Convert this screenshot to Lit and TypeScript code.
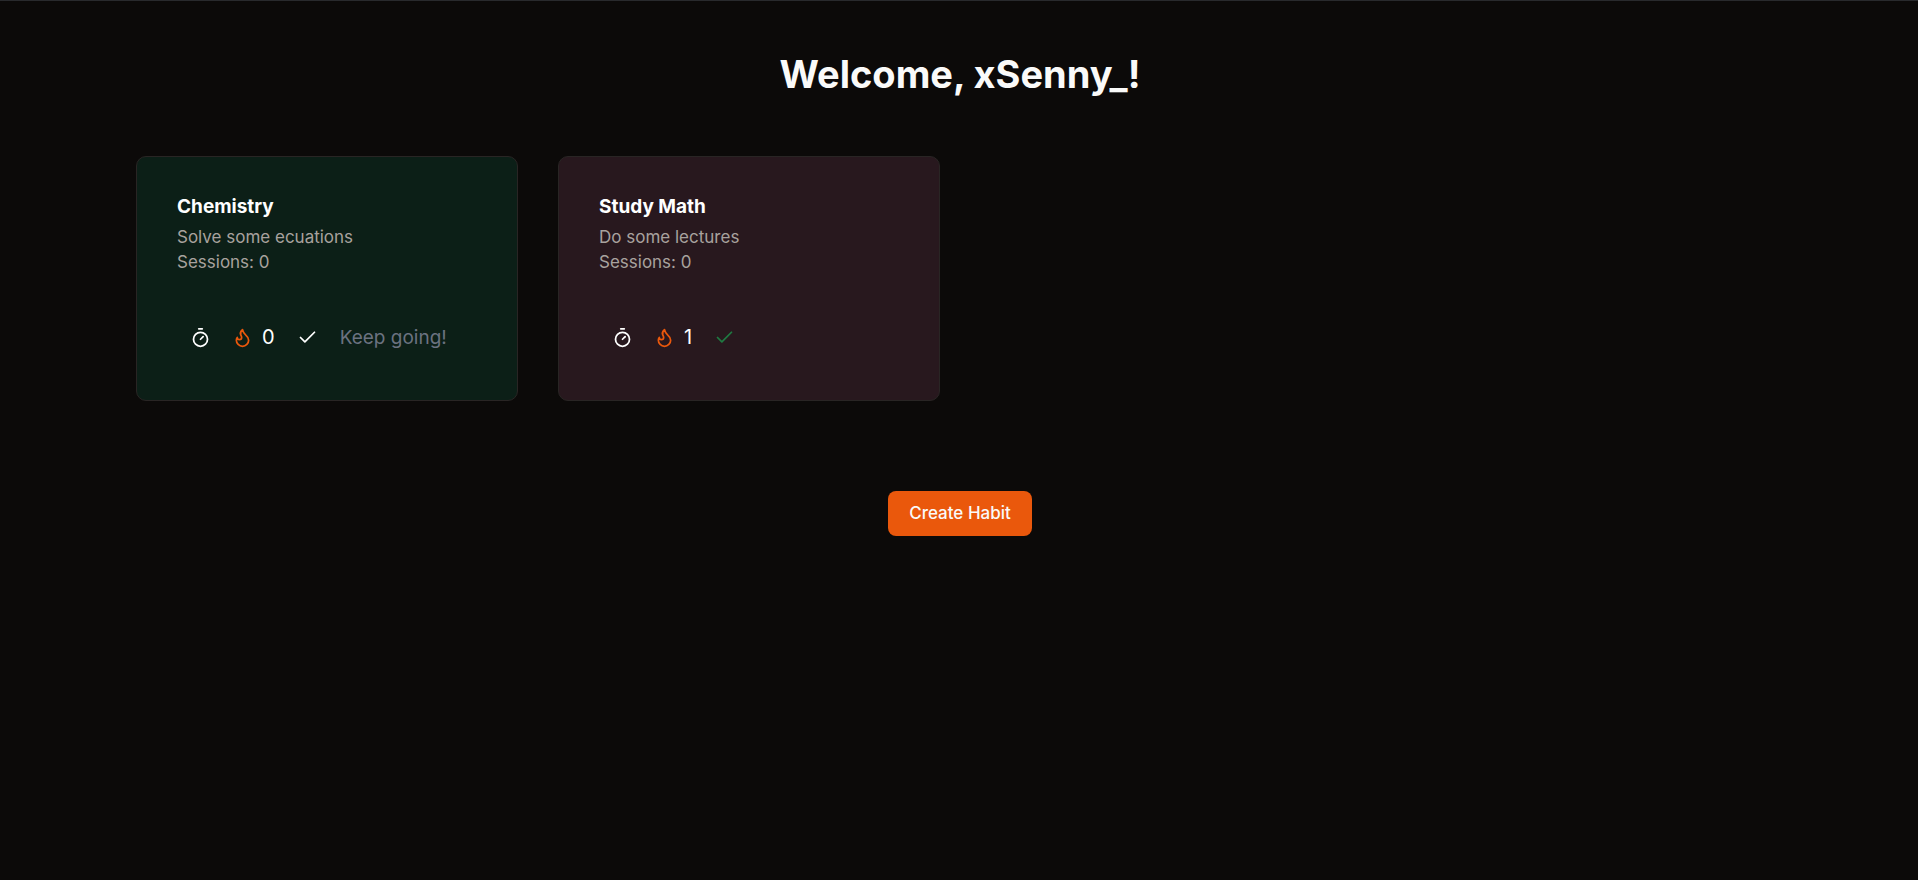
import { LitElement, html, svg, css, nothing } from "lit";
import { customElement, property, state } from "lit/decorators.js";
import { classMap } from "lit/directives/class-map.js";

interface Habit {
  name: string;
  description: string;
  sessions: number;
  streak: number;
  done: boolean;
  tone: "green" | "rose";
}

const timerIcon = svg`<line x1="10" x2="14" y1="2" y2="2" /><line x1="12" x2="15" y1="14" y2="11" /><circle cx="12" cy="14" r="8" />`;
const flameIcon = svg`<path d="M8.5 14.5A2.5 2.5 0 0 0 11 12c0-1.38-.5-2-1-3-1.072-2.143-.224-4.054 2-6 .5 2.5 2 4.9 4 6.5 2 1.6 3 3.5 3 5.5a7 7 0 1 1-14 0c0-1.153.433-2.294 1-3a2.5 2.5 0 0 0 2.5 2.5z" />`;
const checkIcon = svg`<path d="M20 6 9 17l-5-5" />`;

const icon = (shape: unknown) => html`<svg class="icon" viewBox="0 0 24 24" aria-hidden="true">${shape}</svg>`;

@customElement("habit-card")
export class HabitCard extends LitElement {
  @property({ attribute: false }) habit!: Habit;

  static styles = css`
    :host {
      display: block;
    }
    .card {
      box-sizing: border-box;
      height: 100%;
      padding: 36px 40px 41px;
      border: 1px solid #292524;
      border-radius: 10px;
    }
    .green {
      background: #0c1f17;
    }
    .rose {
      background: #28181e;
    }
    .name {
      margin: 0;
      font-size: 19px;
      line-height: 28px;
      font-weight: 700;
      color: #ffffff;
    }
    .details {
      margin: 4px 0 0;
      font-size: 17px;
      line-height: 25px;
      color: #a8a29e;
    }
    .actions {
      display: flex;
      align-items: center;
      height: 44px;
      margin-top: 40px;
      padding-left: 13px;
      font-size: 20px;
      color: #ffffff;
    }
    .action {
      display: flex;
      padding: 0;
      border: 0;
      background: none;
      color: inherit;
      cursor: pointer;
    }
    .streak {
      display: flex;
      align-items: center;
      gap: 9px;
      margin: 0 22px 0 21px;
    }
    .flame {
      display: flex;
      color: #ea580c;
    }
    .done {
      color: #1f7a42;
    }
    .note {
      margin-left: 22px;
      font-size: 19px;
      color: #6b7280;
    }
    .icon {
      width: 21px;
      height: 21px;
      fill: none;
      stroke: currentColor;
      stroke-width: 2;
      stroke-linecap: round;
      stroke-linejoin: round;
    }
  `;

  render() {
    const h = this.habit;
    return html`
      <article class=${classMap({ card: true, [h.tone]: true })}>
        <h2 class="name">${h.name}</h2>
        <p class="details">${h.description}<br />Sessions: ${h.sessions}</p>
        <div class="actions">
          <button class="action" type="button" aria-label="Start timer">${icon(timerIcon)}</button>
          <div class="streak"><span class="flame">${icon(flameIcon)}</span><span>${h.streak}</span></div>
          <button class=${classMap({ action: true, done: h.done })} type="button" aria-label="Mark as done">
            ${icon(checkIcon)}
          </button>
          ${h.done ? nothing : html`<span class="note">Keep going!</span>`}
        </div>
      </article>
    `;
  }
}

@customElement("app-root")
export class AppRoot extends LitElement {
  @state() private habits: Habit[] = [
    { name: "Chemistry", description: "Solve some ecuations", sessions: 0, streak: 0, done: false, tone: "green" },
    { name: "Study Math", description: "Do some lectures", sessions: 0, streak: 1, done: true, tone: "rose" },
  ];

  static styles = css`
    :host {
      display: block;
      box-sizing: border-box;
      min-height: 100vh;
      border-top: 1px solid #292a2d;
      background: #0c0a09;
      color: #fafaf9;
      font-family: Inter, "Liberation Sans", sans-serif;
    }
    .page {
      display: flex;
      flex-direction: column;
      align-items: center;
      padding: 48px 134px 48px 136px;
    }
    .title {
      margin: 0;
      font-size: 38px;
      line-height: 50px;
      font-weight: 700;
      text-align: center;
    }
    .grid {
      display: grid;
      grid-template-columns: repeat(auto-fill, minmax(340px, 1fr));
      gap: 40px;
      width: 100%;
      margin: 57px 0 90px;
    }
    .create {
      padding: 0 21px;
      border: 0;
      border-radius: 8px;
      background: #ea580c;
      color: #fafaf9;
      font: 500 17px/45px Inter, "Liberation Sans", sans-serif;
      cursor: pointer;
    }
  `;

  render() {
    return html`
      <main class="page">
        <h1 class="title">Welcome, xSenny_!</h1>
        <section class="grid">
          ${this.habits.map((habit) => html`<habit-card .habit=${habit}></habit-card>`)}
        </section>
        <button class="create" type="button">Create Habit</button>
      </main>
    `;
  }
}
